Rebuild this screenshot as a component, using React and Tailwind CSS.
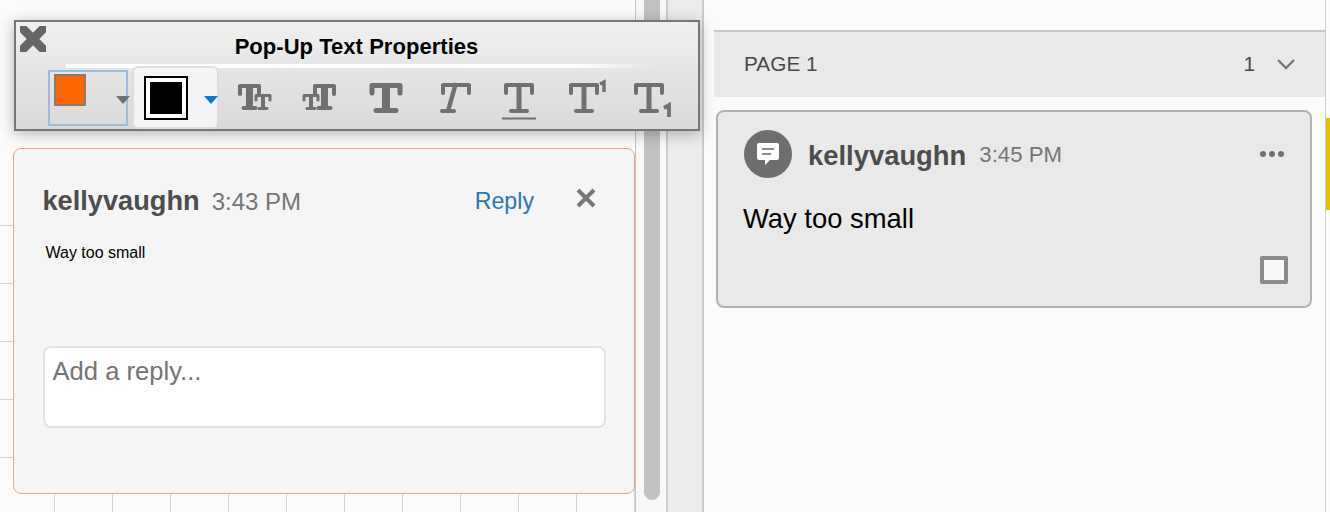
const FONT = "font-['Liberation_Sans',Arial,sans-serif]";

function SerifT({ x1, x2, top, bottom, bar = 4, stem = 5, foot = 8, footH = 4, drop = 10, slant = 0, color = "#707070" }) {
  const cx = (x1 + x2) / 2;
  return (
    <g stroke={color} fill="none" strokeLinejoin="round">
      <path d={`M${x1 + slant} ${top + drop}V${top + bar / 2}H${x2 + slant}V${top + drop}`} strokeWidth={bar} strokeLinecap="round" />
      <path d={`M${cx + slant} ${top}L${cx - slant} ${bottom - footH / 2}`} strokeWidth={stem} />
      <path d={`M${cx - foot - slant} ${bottom - footH / 2}H${cx + foot - slant}`} strokeWidth={footH} strokeLinecap="round" />
    </g>
  );
}

function IconBox({ children }) {
  return (
    <div className="w-[66px] h-[50px] shrink-0 mt-[7px]">
      <svg width="66" height="50" viewBox="0 0 66 50">
        {children}
      </svg>
    </div>
  );
}

function Toolbar() {
  return (
    <div className="absolute left-[14px] top-[20px] w-[686px] h-[111px] border-2 border-[#777777] bg-gradient-to-b from-[#f0f0f0] to-[#d9d9d9] shadow-[0_3px_14px_rgba(0,0,0,0.28)]">
      <div className="grid grid-cols-[1fr_auto_1fr] h-[42px]">
        <svg width="26" height="26" viewBox="0 0 26 26" className="ml-[4px] mt-[4px]">
          <path d="M-3 -3L29 29M29 -3L-3 29" stroke="#666666" strokeWidth="9" />
        </svg>
        <div className="text-[22px] font-bold text-black leading-[25px] mt-[12px] -ml-[1px] tracking-[0.04px]">Pop-Up Text Properties</div>
      </div>
      <div className="h-[4px] ml-[50px] w-[590px] bg-gradient-to-r from-white via-white via-85% to-transparent" />
      <div className="flex items-start">
        <div className="relative ml-[32px] w-[80px] h-[56px] mt-[2px] border-2 border-[#9dbbdd] shrink-0">
          <div className="ml-[4px] mt-[2px] w-[32px] h-[32px] bg-[#ff6600] border-2 border-[#8a7a70]" />
          <div className="absolute left-[66px] top-[24px] w-0 h-0 border-x-[7px] border-x-transparent border-t-[8px] border-t-[#707070]" />
        </div>
        <div className="relative ml-[5px] -translate-x-[1px] w-[87px] h-[63px] -mt-[2px] bg-[#f4f4f6] border-2 border-[#dddddd] rounded-[6px] shrink-0 z-10">
          <div className="ml-[10px] mt-[8px] w-[44px] h-[44px] border-2 border-black bg-white p-[4px]">
            <div className="w-full h-full bg-black" />
          </div>
          <div className="absolute left-[70px] top-[28px] w-0 h-0 border-x-[7px] border-x-transparent border-t-[8px] border-t-[#0a78d0]" />
        </div>
        <div className="flex ml-[1px]">
          <IconBox>
            <SerifT x1={19} x2={38} top={9} bottom={35} bar={4} stem={7} foot={6} />
            <SerifT x1={35} x2={49} top={19} bottom={35} bar={3} stem={4} foot={4} footH={3} drop={6} />
          </IconBox>
          <IconBox>
            <SerifT x1={17} x2={31} top={19} bottom={35} bar={3} stem={4} foot={4} footH={3} drop={6} />
            <SerifT x1={28} x2={47} top={9} bottom={35} bar={4} stem={7} foot={6} />
          </IconBox>
          <IconBox>
            <SerifT x1={19} x2={47} top={8} bottom={38} bar={5} stem={8} foot={10} footH={5} />
          </IconBox>
          <IconBox>
            <SerifT x1={20} x2={46} top={8} bottom={38} bar={4} stem={4.5} foot={6} slant={4} />
          </IconBox>
          <IconBox>
            <SerifT x1={21} x2={47} top={8} bottom={38} />
            <path d="M17 43.5H51" stroke="#707070" strokeWidth="2" />
          </IconBox>
          <IconBox>
            <SerifT x1={20} x2={46} top={8} bottom={38} />
            <path d="M49 9L53 7V17" stroke="#707070" strokeWidth="3.4" fill="none" />
          </IconBox>
          <IconBox>
            <SerifT x1={19} x2={45} top={8} bottom={38} />
            <path d="M47 33L52 30V42" stroke="#707070" strokeWidth="3.8" fill="none" />
          </IconBox>
        </div>
      </div>
    </div>
  );
}

function LeftCard() {
  return (
    <div className="relative w-[622px] h-[346px] border-[1.5px] border-[#eea67f] rounded-[8px] bg-[#f5f5f5] pl-[28.5px] pr-[28px]">
      <div className="flex items-baseline mt-[34.5px] h-[34px]">
        <span className="text-[27.2px] font-bold text-[#4d4d4d] leading-[34px]">kellyvaughn</span>
        <span className="text-[24px] text-[#767676] ml-[12px]">3:43 PM</span>
        <span className="text-[23.2px] text-[#2a74c0] ml-auto mr-[41px] -translate-y-[1px]">Reply</span>
        <svg width="22" height="22" viewBox="0 0 22 22" className="self-center mr-[9px] -mt-[5px]">
          <path d="M3 3L19 19M19 3L3 19" stroke="#777777" strokeWidth="4" />
        </svg>
      </div>
      <div className="text-[16px] text-black leading-[20px] ml-[3px] mt-[25px]">Way too small</div>
      <div className="w-[563px] h-[82px] mt-[83px] border-2 border-[#e2e2e2] rounded-[8px] bg-white pl-[8px] text-[25.6px] leading-[46px] text-[#747474]">
        Add a reply...
      </div>
    </div>
  );
}

function CommentCard() {
  return (
    <div className="relative mt-[13px] ml-[2px] w-[596px] h-[198px] border-2 border-[#b2b2b2] rounded-[8px] bg-[#e9e9e9] pl-[26px] pr-[22px] pt-[18px]">
      <div className="flex items-center h-[48px]">
        <div className="w-[48px] h-[48px] rounded-full bg-[#6e6e6e] flex items-center justify-center shrink-0">
          <svg width="24" height="26" viewBox="0 0 24 26">
            <path d="M3 2H21A2 2 0 0 1 23 4V17A2 2 0 0 1 21 19H14L9 24V19H3A2 2 0 0 1 1 17V4A2 2 0 0 1 3 2Z" fill="#ffffff" />
            <path d="M6 8H18M6 13H15" stroke="#8a8a8a" strokeWidth="2" />
          </svg>
        </div>
        <span className="text-[27.4px] font-bold text-[#4d4d4d] ml-[16px] mt-[4px]">kellyvaughn</span>
        <span className="text-[22.2px] text-[#767676] ml-[13px] mt-[1px]">3:45 PM</span>
        <svg width="26" height="8" viewBox="0 0 26 8" className="ml-auto mr-[3px]">
          <circle cx="4" cy="4" r="3" fill="#707070" />
          <circle cx="13" cy="4" r="3" fill="#707070" />
          <circle cx="22" cy="4" r="3" fill="#707070" />
        </svg>
      </div>
      <div className="text-[27.4px] leading-[34px] text-black mt-[24px] -ml-[1px]">Way too small</div>
      <div className="absolute right-[22px] bottom-[22px] w-[28px] h-[28px] border-[4px] border-[#8b8b8b] rounded-[2px] bg-[#f8f8f8]" />
    </div>
  );
}

export default function App() {
  return (
    <div className={`relative flex w-[1330px] h-[512px] overflow-hidden bg-[#fbfbfb] ${FONT}`}>
      <div className="relative w-[636px] h-full shrink-0 border-r border-[#c4c4c4] pl-[13px] pt-[148px]">
        <div className="absolute inset-x-0 top-[200px] bottom-0 bg-[linear-gradient(to_right,#d2d2d2_1px,transparent_1px),linear-gradient(to_bottom,#d2d2d2_1px,transparent_1px)] bg-[size:58px_58px] bg-[position:54px_25px]" />
        <LeftCard />
      </div>
      <div className="w-[30px] h-full shrink-0 bg-[#f8f8f8] pl-[8px]">
        <div className="w-[16px] h-[500px] bg-[#c2c2c2] rounded-b-[8px]" />
      </div>
      <div className="w-[38px] h-full shrink-0 border-x-2 border-[#cccccc] bg-[#ececec]" />
      <div className="w-[621px] h-full shrink-0 pl-[10px] pt-[30px]">
        <div className="flex items-center h-[67px] border-t-2 border-[#c8c8c8] bg-[#e9e9e9] pl-[30px] pr-[29px] pb-[2px] text-[20.8px] text-[#4a4a4a]">
          <span>PAGE 1</span>
          <span className="ml-auto">1</span>
          <svg width="20" height="12" viewBox="0 0 20 12" className="ml-[21px]">
            <path d="M2 2L10 10L18 2" stroke="#777777" strokeWidth="2.4" fill="none" />
          </svg>
        </div>
        <CommentCard />
      </div>
      <div className="w-[5px] h-full shrink-0 border-l border-[#cccccc] pt-[118px]">
        <div className="w-full h-[92px] bg-[#e3c000]" />
      </div>
      <Toolbar />
    </div>
  );
}
